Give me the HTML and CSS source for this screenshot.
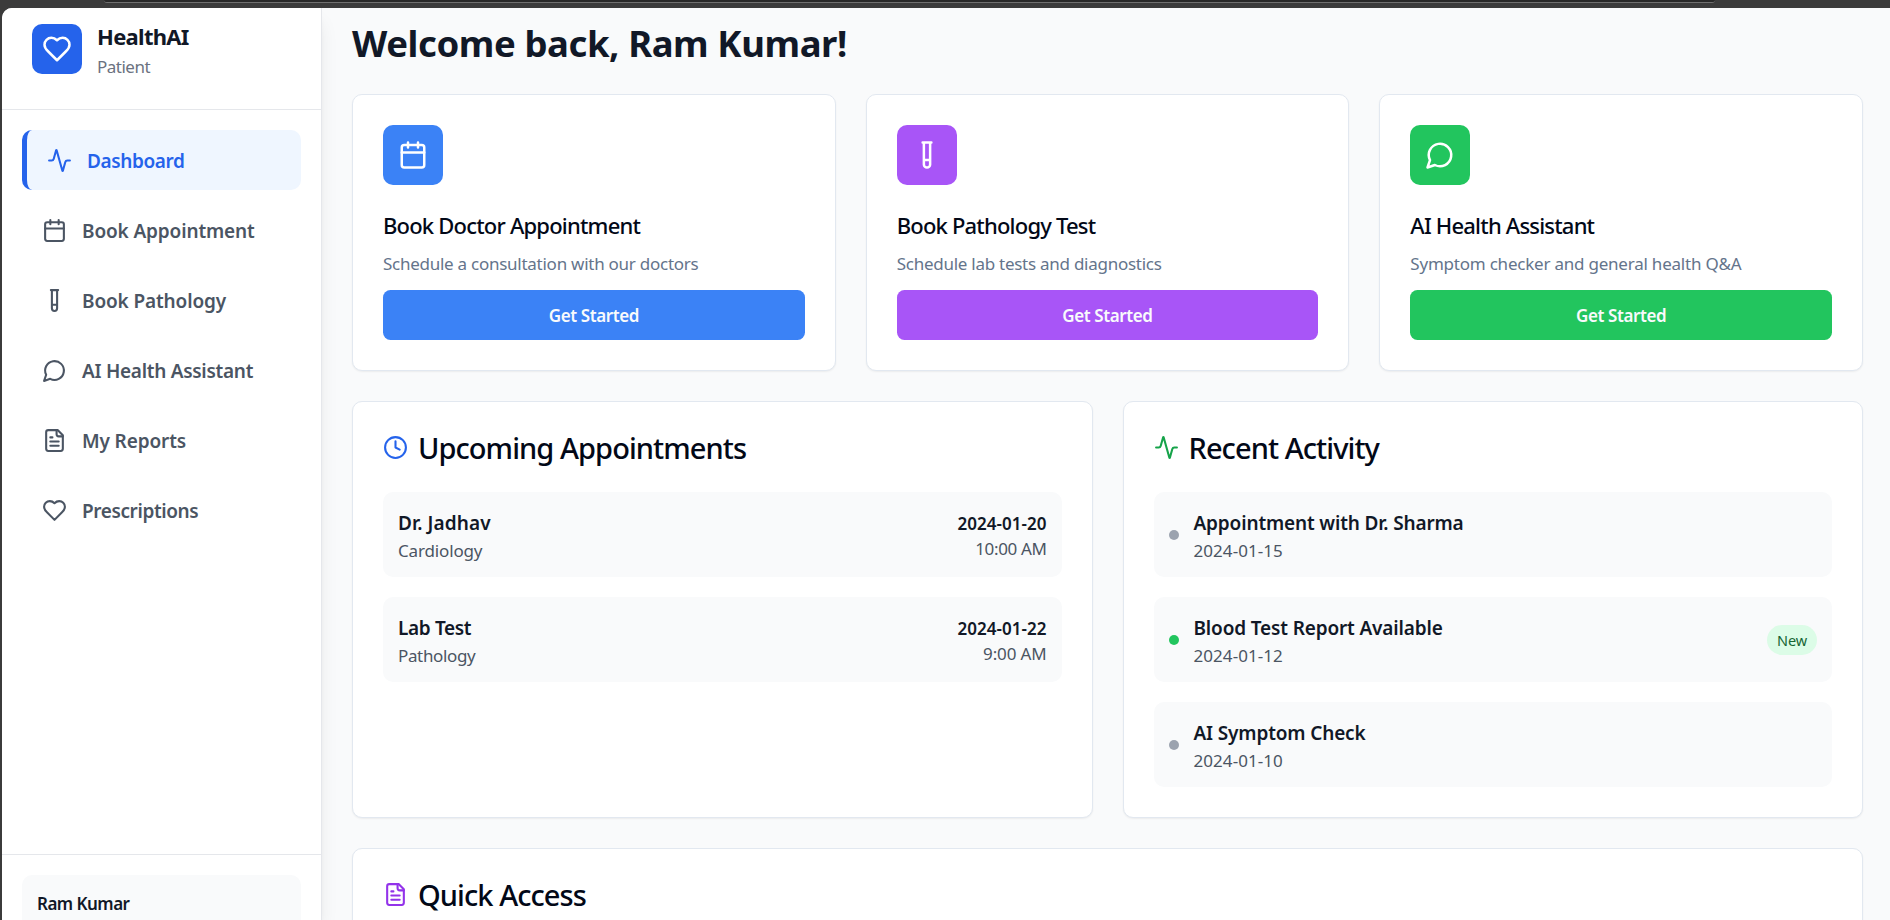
FILE: index.html
```html
<!DOCTYPE html>
<html lang="en">
<head>
<meta charset="utf-8">
<title>HealthAI</title>
<link rel="stylesheet" href="styles.css">
</head>
<body>
<svg class="sprite" aria-hidden="true">
  <symbol id="heart" viewBox="0 0 24 24"><path d="M19 14c1.49-1.46 3-3.21 3-5.5A5.5 5.5 0 0 0 16.500 3c-1.760 0-3 .5-4.500 2-1.500-1.500-2.740-2-4.500-2A5.500 5.500 0 0 0 2 8.500c0 2.300 1.500 4.050 3 5.500l7 7Z"/></symbol>
  <symbol id="activity" viewBox="0 0 24 24"><path d="M22 12h-2.480a2 2 0 0 0-1.930 1.460l-2.350 8.360a.25.25 0 0 1-.48 0L9.240 2.180a.25.25 0 0 0-.48 0l-2.350 8.360A2 2 0 0 1 4.490 12H2"/></symbol>
  <symbol id="calendar" viewBox="0 0 24 24"><path d="M8 2v4M16 2v4M3 10h18"/><rect width="18" height="18" x="3" y="4" rx="2"/></symbol>
  <symbol id="tube" viewBox="0 0 24 24"><path d="M14.500 2v17.500c0 1.400-1.100 2.500-2.500 2.500s-2.500-1.100-2.500-2.500V2M8.500 2h7M14.500 16h-5"/></symbol>
  <symbol id="chat" viewBox="0 0 24 24"><path d="M7.900 20A9 9 0 1 0 4 16.100L2 22Z"/></symbol>
  <symbol id="file" viewBox="0 0 24 24"><path d="M15 2H6a2 2 0 0 0-2 2v16a2 2 0 0 0 2 2h12a2 2 0 0 0 2-2V7Z"/><path d="M14 2v4a2 2 0 0 0 2 2h4M10 9H8M16 13H8M16 17H8"/></symbol>
  <symbol id="clock" viewBox="0 0 24 24"><circle cx="12" cy="12" r="10"/><path d="M12 6v6l4 2"/></symbol>
</svg>
<div class="chrome"><div class="chrome-bar"></div></div>
<div class="app">
  <aside class="sidebar">
    <div class="brand">
      <div class="logo"><svg class="icon icon-lg"><use href="#heart"/></svg></div>
      <div><div class="brand-name">HealthAI</div><div class="brand-role">Patient</div></div>
    </div>
    <nav class="nav">
      <a class="nav-item active"><svg class="icon"><use href="#activity"/></svg><span class="snug">Dashboard</span></a>
      <a class="nav-item"><svg class="icon"><use href="#calendar"/></svg><span>Book Appointment</span></a>
      <a class="nav-item"><svg class="icon"><use href="#tube"/></svg><span>Book Pathology</span></a>
      <a class="nav-item"><svg class="icon"><use href="#chat"/></svg><span class="mid">AI Health Assistant</span></a>
      <a class="nav-item"><svg class="icon"><use href="#file"/></svg><span>My Reports</span></a>
      <a class="nav-item"><svg class="icon"><use href="#heart"/></svg><span class="snug">Prescriptions</span></a>
    </nav>
    <div class="account"><div class="account-card">Ram Kumar</div></div>
  </aside>
  <main class="main">
    <h1 class="welcome">Welcome back, Ram Kumar!</h1>
    <section class="actions">
      <article class="card action blue">
        <div class="tile"><svg class="icon icon-lg"><use href="#calendar"/></svg></div>
        <h3>Book Doctor Appointment</h3><p>Schedule a consultation with our doctors</p><button>Get Started</button>
      </article>
      <article class="card action purple">
        <div class="tile"><svg class="icon icon-lg"><use href="#tube"/></svg></div>
        <h3>Book Pathology Test</h3><p>Schedule lab tests and diagnostics</p><button>Get Started</button>
      </article>
      <article class="card action green">
        <div class="tile"><svg class="icon icon-lg"><use href="#chat"/></svg></div>
        <h3>AI Health Assistant</h3><p class="wide">Symptom checker and general health Q&amp;A</p><button>Get Started</button>
      </article>
    </section>
    <section class="panels">
      <article class="card panel">
        <h2><svg class="icon c-blue"><use href="#clock"/></svg><span>Upcoming Appointments</span></h2>
        <div class="rows">
          <div class="row"><div class="info"><b class="loose">Dr. Jadhav</b><span>Cardiology</span></div><div class="when"><b>2024-01-20</b><span class="snug">10:00 AM</span></div></div>
          <div class="row"><div class="info"><b class="snug">Lab Test</b><span class="snug">Pathology</span></div><div class="when"><b>2024-01-22</b><span>9:00 AM</span></div></div>
        </div>
      </article>
      <article class="card panel">
        <h2><svg class="icon c-green"><use href="#activity"/></svg><span>Recent Activity</span></h2>
        <div class="rows">
          <div class="row"><i class="dot"></i><div class="info"><b>Appointment with Dr. Sharma</b><span class="date">2024-01-15</span></div></div>
          <div class="row"><i class="dot dot-new"></i><div class="info"><b>Blood Test Report Available</b><span class="date">2024-01-12</span></div><em class="badge">New</em></div>
          <div class="row"><i class="dot"></i><div class="info"><b>AI Symptom Check</b><span class="date">2024-01-10</span></div></div>
        </div>
      </article>
    </section>
    <article class="card panel">
      <h2><svg class="icon c-purple"><use href="#file"/></svg><span>Quick Access</span></h2>
    </article>
  </main>
</div>
</body>
</html>
```
FILE: styles.css
```css
* { box-sizing: border-box; }
body {
  margin: 0; height: 920px; overflow: hidden; background: #3b3b3b;
  display: flex; flex-direction: column;
  font-family: "Noto Sans", "Open Sans", sans-serif; font-weight: 400;
}
h1, h2, h3, p { margin: 0; }
.sprite { display: none; }
.icon {
  width: 25px; height: 25px; flex: none; fill: none; stroke: currentColor;
  stroke-width: 2; stroke-linecap: round; stroke-linejoin: round;
}
.icon-lg { width: 30px; height: 30px; }

.chrome { height: 8px; flex: none; padding: 0 175px 0 104px; }
.chrome-bar { height: 3px; background: #282828; border-bottom: 1px solid #707070; border-radius: 0 0 12px 12px; }
.app {
  flex: 1; min-height: 0; margin-left: 2px; display: flex; overflow: hidden;
  background: #f9fafb; border-radius: 10px 0 0 0;
}

.sidebar {
  width: 320px; flex: none; display: flex; flex-direction: column; position: relative;
  background: #fff; border-right: 1px solid #e5e7eb;
  box-shadow: 0 12px 19px -4px rgba(0,0,0,.1), 0 5px 8px -5px rgba(0,0,0,.1);
}
.brand {
  height: 102px; padding: 11px 30px 0; display: flex; align-items: flex-start; gap: 15px;
  border-bottom: 1px solid #e5e7eb;
}
.logo {
  width: 50px; height: 50px; margin-top: 5px; border-radius: 10px; background: #2563eb; color: #fff;
  display: grid; place-items: center;
}
.brand-name { font-size: 22px; line-height: 35px; font-weight: 700; letter-spacing: -.7px; color: #111827; }
.brand-role { font-size: 17px; line-height: 25px; letter-spacing: -.51px; color: #6b7280; }
.nav { padding: 20px; display: flex; flex-direction: column; gap: 10px; }
.nav-item {
  height: 60px; padding: 0 20px; display: flex; align-items: center; gap: 15px;
  border-radius: 10px; color: #4b5563; font-size: 19px; font-weight: 600; letter-spacing: -.13px;
}
.nav-item span { padding-top: 2px; }
.nav-item.active { background: #eff6ff; color: #2563eb; border-left: 5px solid #2563eb; }
.nav-item .snug { letter-spacing: -.4px; }
.nav-item .mid { letter-spacing: -.28px; }
.account { margin-top: auto; height: 66px; padding: 20px 20px 0; border-top: 1px solid #e5e7eb; overflow: hidden; }
.account-card {
  height: 90px; padding: 16px 15px; border-radius: 10px; background: #f9fafb;
  font-size: 17px; line-height: 25px; font-weight: 600; letter-spacing: -.52px; color: #111827;
}

.main { flex: 1; min-width: 0; padding: 11px 27px 0 30px; display: flex; flex-direction: column; gap: 30px; }
.welcome { height: 45px; font-size: 36.5px; line-height: 48px; font-weight: 700; letter-spacing: -.42px; color: #111827; }
.card { background: #fff; border: 1px solid #e2e8f0; border-radius: 10px; box-shadow: 0 1px 2px rgba(0,0,0,.06); }
.actions { display: grid; grid-template-columns: repeat(3, 1fr); gap: 30px; }
.action { height: 277px; padding: 30px; display: flex; flex-direction: column; }
.tile { width: 60px; height: 60px; border-radius: 10px; display: grid; place-items: center; color: #fff; background: var(--accent); }
.action h3 { margin-top: 25px; font-size: 22px; line-height: 30px; font-weight: 500; letter-spacing: -.8px; color: #020817; }
.action p { margin-top: 11px; font-size: 17px; line-height: 25px; letter-spacing: -.26px; color: #64748b; }
.action p.wide { letter-spacing: -.22px; }
.action button {
  height: 50px; margin-top: 14px; padding-top: 2px; border: 0; border-radius: 7.5px; background: var(--accent); color: #f8fafc;
  font: inherit; font-size: 17px; font-weight: 600; letter-spacing: -.4px;
}
.blue { --accent: #3b82f6; }
.purple { --accent: #a855f7; }
.green { --accent: #22c55e; }

.panels { display: grid; grid-template-columns: 1fr 1fr; gap: 30px; }
.panel { min-height: 417px; padding: 30px; }
.panel h2 {
  height: 30px; display: flex; align-items: center; gap: 10px;
  font-size: 29px; line-height: 30px; font-weight: 500; letter-spacing: -.93px; color: #020817;
}
.panel h2 span { padding-top: 2px; }
.c-blue { color: #2563eb; }
.c-green { color: #16a34a; }
.c-purple { color: #9333ea; }
.rows { margin-top: 30px; display: flex; flex-direction: column; gap: 20px; }
.row { height: 85px; padding: 17px 15px 15px; display: flex; align-items: center; gap: 15px; border-radius: 10px; background: #f9fafb; }
.info { flex: 1; display: flex; flex-direction: column; }
.row b { font-size: 19px; line-height: 30px; font-weight: 600; letter-spacing: -.15px; color: #111827; }
.row span { font-size: 17px; line-height: 25px; color: #4b5563; letter-spacing: -.15px; }
.row .date { letter-spacing: .06px; }
.row .loose { letter-spacing: .08px; }
.row .snug { letter-spacing: -.36px; }
.when { display: flex; flex-direction: column; text-align: right; }
.when b { font-size: 17px; line-height: 25px; letter-spacing: .04px; }
.dot { width: 10px; height: 10px; margin-top: -2px; border-radius: 50%; background: #9ca3af; }
.dot-new { background: #22c55e; }
.badge {
  height: 30px; margin-top: -2px; padding: 0 10px; border-radius: 15px; background: #dcfce7; color: #166534;
  font-size: 14.5px; line-height: 31px; font-style: normal; letter-spacing: -.1px;
}
```
